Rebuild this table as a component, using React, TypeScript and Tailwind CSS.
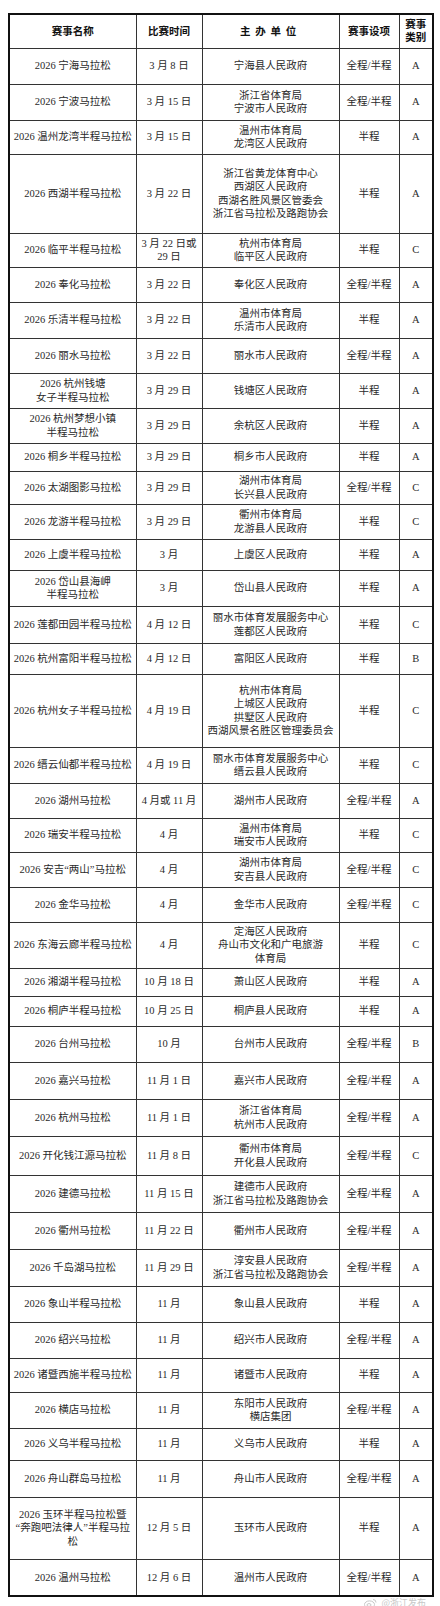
import React from "react"

type Row = {
  name: string[]
  date: string[]
  org: string[]
  item: string
  cls: string
  h: string
}

const rows: Row[] = [
  { name: ["2026 宁海马拉松"], date: ["3 月 8 日"], org: ["宁海县人民政府"], item: "全程/半程", cls: "A", h: "h-[36px]" },
  { name: ["2026 宁波马拉松"], date: ["3 月 15 日"], org: ["浙江省体育局", "宁波市人民政府"], item: "全程/半程", cls: "A", h: "h-[36px]" },
  { name: ["2026 温州龙湾半程马拉松"], date: ["3 月 15 日"], org: ["温州市体育局", "龙湾区人民政府"], item: "半程", cls: "A", h: "h-[34px]" },
  { name: ["2026 西湖半程马拉松"], date: ["3 月 22 日"], org: ["浙江省黄龙体育中心", "西湖区人民政府", "西湖名胜风景区管委会", "浙江省马拉松及路跑协会"], item: "半程", cls: "A", h: "h-[79px]" },
  { name: ["2026 临平半程马拉松"], date: ["3 月 22 日或", "29 日"], org: ["杭州市体育局", "临平区人民政府"], item: "半程", cls: "C", h: "h-[34px]" },
  { name: ["2026 奉化马拉松"], date: ["3 月 22 日"], org: ["奉化区人民政府"], item: "全程/半程", cls: "A", h: "h-[35px]" },
  { name: ["2026 乐清半程马拉松"], date: ["3 月 22 日"], org: ["温州市体育局", "乐清市人民政府"], item: "半程", cls: "A", h: "h-[36px]" },
  { name: ["2026 丽水马拉松"], date: ["3 月 22 日"], org: ["丽水市人民政府"], item: "全程/半程", cls: "A", h: "h-[35px]" },
  { name: ["2026 杭州钱塘", "女子半程马拉松"], date: ["3 月 29 日"], org: ["钱塘区人民政府"], item: "半程", cls: "A", h: "h-[35px]" },
  { name: ["2026 杭州梦想小镇", "半程马拉松"], date: ["3 月 29 日"], org: ["余杭区人民政府"], item: "半程", cls: "A", h: "h-[35px]" },
  { name: ["2026 桐乡半程马拉松"], date: ["3 月 29 日"], org: ["桐乡市人民政府"], item: "半程", cls: "A", h: "h-[28px]" },
  { name: ["2026 太湖图影马拉松"], date: ["3 月 29 日"], org: ["湖州市体育局", "长兴县人民政府"], item: "全程/半程", cls: "C", h: "h-[33px]" },
  { name: ["2026 龙游半程马拉松"], date: ["3 月 29 日"], org: ["衢州市体育局", "龙游县人民政府"], item: "半程", cls: "C", h: "h-[35px]" },
  { name: ["2026 上虞半程马拉松"], date: ["3 月"], org: ["上虞区人民政府"], item: "半程", cls: "A", h: "h-[31px]" },
  { name: ["2026 岱山县海岬", "半程马拉松"], date: ["3 月"], org: ["岱山县人民政府"], item: "半程", cls: "A", h: "h-[36px]" },
  { name: ["2026 莲都田园半程马拉松"], date: ["4 月 12 日"], org: ["丽水市体育发展服务中心", "莲都区人民政府"], item: "半程", cls: "C", h: "h-[37px]" },
  { name: ["2026 杭州富阳半程马拉松"], date: ["4 月 12 日"], org: ["富阳区人民政府"], item: "半程", cls: "B", h: "h-[31px]" },
  { name: ["2026 杭州女子半程马拉松"], date: ["4 月 19 日"], org: ["杭州市体育局", "上城区人民政府", "拱墅区人民政府", "西湖风景名胜区管理委员会"], item: "半程", cls: "C", h: "h-[73px]" },
  { name: ["2026 缙云仙都半程马拉松"], date: ["4 月 19 日"], org: ["丽水市体育发展服务中心", "缙云县人民政府"], item: "半程", cls: "C", h: "h-[36px]" },
  { name: ["2026 湖州马拉松"], date: ["4 月或 11 月"], org: ["湖州市人民政府"], item: "全程/半程", cls: "A", h: "h-[35px]" },
  { name: ["2026 瑞安半程马拉松"], date: ["4 月"], org: ["温州市体育局", "瑞安市人民政府"], item: "半程", cls: "C", h: "h-[34px]" },
  { name: ["2026 安吉“两山”马拉松"], date: ["4 月"], org: ["湖州市体育局", "安吉县人民政府"], item: "全程/半程", cls: "C", h: "h-[35px]" },
  { name: ["2026 金华马拉松"], date: ["4 月"], org: ["金华市人民政府"], item: "全程/半程", cls: "C", h: "h-[35px]" },
  { name: ["2026 东海云廊半程马拉松"], date: ["4 月"], org: ["定海区人民政府", "舟山市文化和广电旅游", "体育局"], item: "半程", cls: "C", h: "h-[46px]" },
  { name: ["2026 湘湖半程马拉松"], date: ["10 月 18 日"], org: ["萧山区人民政府"], item: "半程", cls: "A", h: "h-[28px]" },
  { name: ["2026 桐庐半程马拉松"], date: ["10 月 25 日"], org: ["桐庐县人民政府"], item: "半程", cls: "A", h: "h-[30px]" },
  { name: ["2026 台州马拉松"], date: ["10 月"], org: ["台州市人民政府"], item: "全程/半程", cls: "B", h: "h-[36px]" },
  { name: ["2026 嘉兴马拉松"], date: ["11 月 1 日"], org: ["嘉兴市人民政府"], item: "全程/半程", cls: "A", h: "h-[37px]" },
  { name: ["2026 杭州马拉松"], date: ["11 月 1 日"], org: ["浙江省体育局", "杭州市人民政府"], item: "全程/半程", cls: "A", h: "h-[37px]" },
  { name: ["2026 开化钱江源马拉松"], date: ["11 月 8 日"], org: ["衢州市体育局", "开化县人民政府"], item: "全程/半程", cls: "C", h: "h-[39px]" },
  { name: ["2026 建德马拉松"], date: ["11 月 15 日"], org: ["建德市人民政府", "浙江省马拉松及路跑协会"], item: "全程/半程", cls: "A", h: "h-[37px]" },
  { name: ["2026 衢州马拉松"], date: ["11 月 22 日"], org: ["衢州市人民政府"], item: "全程/半程", cls: "A", h: "h-[37px]" },
  { name: ["2026 千岛湖马拉松"], date: ["11 月 29 日"], org: ["淳安县人民政府", "浙江省马拉松及路跑协会"], item: "全程/半程", cls: "A", h: "h-[37px]" },
  { name: ["2026 象山半程马拉松"], date: ["11 月"], org: ["象山县人民政府"], item: "半程", cls: "A", h: "h-[36px]" },
  { name: ["2026 绍兴马拉松"], date: ["11 月"], org: ["绍兴市人民政府"], item: "全程/半程", cls: "A", h: "h-[36px]" },
  { name: ["2026 诸暨西施半程马拉松"], date: ["11 月"], org: ["诸暨市人民政府"], item: "半程", cls: "A", h: "h-[34px]" },
  { name: ["2026 横店马拉松"], date: ["11 月"], org: ["东阳市人民政府", "横店集团"], item: "全程/半程", cls: "A", h: "h-[36px]" },
  { name: ["2026 义乌半程马拉松"], date: ["11 月"], org: ["义乌市人民政府"], item: "半程", cls: "A", h: "h-[32px]" },
  { name: ["2026 舟山群岛马拉松"], date: ["11 月"], org: ["舟山市人民政府"], item: "全程/半程", cls: "A", h: "h-[37px]" },
  { name: ["2026 玉环半程马拉松暨", "“奔跑吧法律人”半程马拉", "松"], date: ["12 月 5 日"], org: ["玉环市人民政府"], item: "半程", cls: "A", h: "h-[62px]" },
  { name: ["2026 温州马拉松"], date: ["12 月 6 日"], org: ["温州市人民政府"], item: "全程/半程", cls: "A", h: "h-[37px]" },
]

function Lines({ lines }: { lines: string[] }) {
  return (
    <>
      {lines.map((l, i) => (
        <div key={i} className="whitespace-nowrap">{l}</div>
      ))}
    </>
  )
}

const td = "border border-[#333] text-center align-middle p-0"

export default function App() {
  return (
    <div className="w-[440px] h-[1606px] bg-white pt-[13px] px-[8px] font-['Liberation_Serif','Noto_Sans_CJK_SC',serif] text-[10.5px] leading-[13.5px] text-[#2a2a2a]">
      <table className="w-[424px] table-fixed border-collapse border-2 border-[#111]">
        <colgroup>
          <col className="w-[127px]" />
          <col className="w-[66px]" />
          <col className="w-[137px]" />
          <col className="w-[60px]" />
          <col className="w-[34px]" />
        </colgroup>
        <thead>
          <tr className="h-[34px] font-bold text-[#111]">
            <th className={td}>赛事名称</th>
            <th className={td}>比赛时间</th>
            <th className={`${td} tracking-[0.45em]`}>主办单位</th>
            <th className={td}>赛事设项</th>
            <th className={td}>
              <div>赛事</div>
              <div>类别</div>
            </th>
          </tr>
        </thead>
        <tbody>
          {rows.map((r, i) => (
            <tr key={i} className={r.h}>
              <td className={td}><Lines lines={r.name} /></td>
              <td className={td}><Lines lines={r.date} /></td>
              <td className={td}><Lines lines={r.org} /></td>
              <td className={td}>{r.item}</td>
              <td className={td}>{r.cls}</td>
            </tr>
          ))}
        </tbody>
      </table>
      <div className="flex justify-end items-center gap-1 pr-[6px] text-[#c8c8c8] text-[9px] leading-[12px] font-['Noto_Sans_CJK_SC',sans-serif]">
        <svg width="13" height="11" viewBox="0 0 13 11" fill="none" stroke="#c8c8c8" strokeWidth="1">
          <ellipse cx="5.5" cy="6.5" rx="5" ry="3.6" />
          <ellipse cx="5" cy="7" rx="2" ry="1.4" />
          <path d="M9 1.5 A3 3 0 0 1 12 4.5" />
        </svg>
        <span>@浙江发布</span>
      </div>
    </div>
  )
}
